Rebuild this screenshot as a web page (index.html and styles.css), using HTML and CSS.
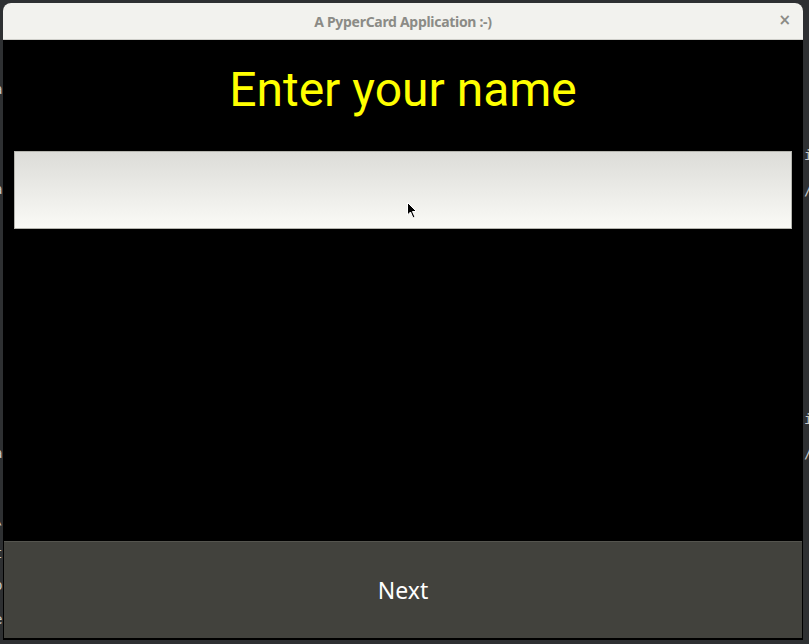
FILE: index.html
```html
<!DOCTYPE html>
<html>
<head>
<meta charset="utf-8">
<link rel="stylesheet" href="styles.css">
</head>
<body>
<div class="desktop">
  <div class="term term-left">
    <span class="g g1">a</span>
    <span class="g g2">a</span>
    <span class="g g3">a</span>
    <span class="g g4">\</span>
    <span class="g g5">t</span>
    <span class="g g6">p</span>
    <span class="g g7">e</span>
  </div>
  <div class="term term-right">
    <span class="g r1">i</span>
    <span class="g r2">/</span>
    <span class="g r3">i</span>
    <span class="g r4">/</span>
  </div>
  <div class="window">
    <div class="titlebar">
      <span class="title">A PyperCard Application :-)</span>
      <span class="close">×</span>
    </div>
    <div class="content">
      <h1 class="heading">Enter your name</h1>
      <div class="field"><input class="name-input" type="text"></div>
      <div class="spacer"></div>
      <button class="next">Next</button>
    </div>
  </div>
  <svg class="cursor" width="12" height="18" viewBox="0 0 12 18">
    <path d="M0.5 0.5 L0.5 13 L3.5 10 L6 16 L8 15 L5.5 9.5 L9.5 9.5 Z" fill="#000" stroke="#fff" stroke-width="1"/>
  </svg>
</div>
</body>
</html>
```
FILE: styles.css
```css
html, body {
  margin: 0;
  padding: 0;
}
body {
  width: 809px;
  height: 644px;
  background: #2e3032;
  overflow: hidden;
}
.desktop {
  position: relative;
  width: 809px;
  height: 644px;
  padding: 3px 0 0 3px;
  box-sizing: border-box;
}
.term {
  position: absolute;
  top: 0;
  font-family: "DejaVu Sans Mono", monospace;
  font-size: 14px;
  color: #c8c8c8;
}
.term-left { left: -6px; width: 10px; height: 644px; }
.term-right { left: 804px; width: 10px; height: 644px; }
.g { position: absolute; left: 0; line-height: 1; }
.g1 { top: 82px; }
.g2 { top: 182px; }
.g3 { top: 446px; }
.g4 { top: 512px; }
.g5 { top: 546px; }
.g6 { top: 578px; }
.g7 { top: 612px; }
.r1 { top: 148px; }
.r2 { top: 183px; }
.r3 { top: 412px; }
.r4 { top: 446px; }
.window {
  position: relative;
  width: 800px;
  height: 637px;
  display: flex;
  flex-direction: column;
  background: #000;
  border-radius: 8px 8px 0 0;
  overflow: hidden;
}
.titlebar {
  height: 36px;
  flex: none;
  background: #f2f2ee;
  border-bottom: 1px solid #cfcfca;
  display: flex;
  align-items: center;
  justify-content: center;
  position: relative;
}
.title {
  font-family: "Noto Sans", sans-serif;
  font-weight: 700;
  font-size: 14px;
  letter-spacing: -0.3px;
  color: #8b8b86;
}
.close {
  position: absolute;
  right: 12px;
  top: 8px;
  font-family: "DejaVu Sans", sans-serif;
  font-weight: 700;
  font-size: 15px;
  color: #8b8b86;
}
.content {
  flex: 1;
  display: flex;
  flex-direction: column;
  background: #000;
}
.heading {
  margin: 0;
  padding-top: 22px;
  height: 87px;
  box-sizing: border-box;
  text-align: center;
  font-family: Roboto, sans-serif;
  font-weight: 400;
  font-size: 48px;
  line-height: 56px;
  color: #ffff00;
}
.field {
  padding: 24px 11px 0 11px;
}
.name-input {
  display: block;
  width: 778px;
  height: 78px;
  box-sizing: border-box;
  margin: 0;
  border: 1px solid #b4b4ae;
  background: linear-gradient(#dcdcd8, #fafaf6);
  outline: none;
}
.spacer { flex: 1; }
.next {
  margin: 0 1px 2px 1px;
  height: 97px;
  flex: none;
  border: none;
  border-top: 1px solid #55554f;
  background: #42423d;
  color: #ffffff;
  font-family: "Noto Sans", sans-serif;
  font-size: 23px;
  padding: 0;
}
.cursor {
  position: absolute;
  left: 407px;
  top: 202px;
}
```
